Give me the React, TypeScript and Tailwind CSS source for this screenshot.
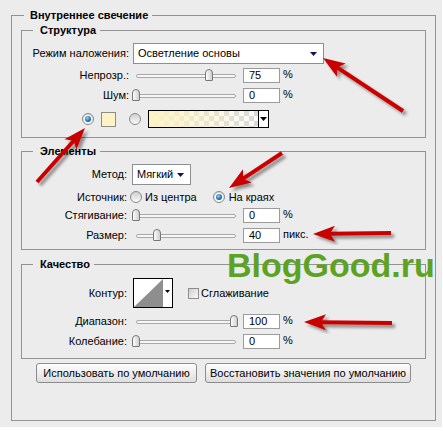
import type { ReactNode } from "react"

const arrows: { from: [number, number]; to: [number, number] }[] = [
  { from: [403, 111], to: [323, 58] },
  { from: [37, 182], to: [85, 128] },
  { from: [282, 153], to: [229, 188] },
  { from: [391, 233], to: [313, 234] },
  { from: [392, 323], to: [304, 322] },
]

function Box({ title, children, className = "" }: { title: string; children: ReactNode; className?: string }) {
  return (
    <fieldset className={"border border-[#939393] p-0 " + className}>
      <legend className="ml-[11px] pl-[7px] pr-[4px] text-[11px] leading-[14px] font-bold">{title}</legend>
      {children}
    </fieldset>
  )
}

function Label({ children, w = "w-[107px]" }: { children: ReactNode; w?: string }) {
  return <span className={w + " shrink-0 text-right whitespace-nowrap"}>{children}</span>
}

function Tri({ color = "#000" }: { color?: string }) {
  return (
    <svg width="7" height="4" viewBox="0 0 7 4">
      <polygon points="0,0 7,0 3.5,4" fill={color} />
    </svg>
  )
}

function Dropdown({ text, w }: { text: string; w: string }) {
  return (
    <div className={w + " h-[21px] flex items-center justify-between border border-[#8f8f8f] bg-white pl-[4px] pr-[6px]"}>
      <span>{text}</span>
      <Tri color="#101060" />
    </div>
  )
}

function Slider({ pos }: { pos: number }) {
  return (
    <div className="relative w-[106px] h-[15px] shrink-0">
      <div className="absolute left-[3px] right-[3px] top-[6px] h-[4px] rounded-full border border-[#a9a9a9] bg-[#f6f6f6]" />
      <div
        className="absolute top-[1px] w-[8px] h-[12px] rounded-t-[4px] rounded-b-[1px] border border-[#777] bg-[linear-gradient(to_right,#fdfdfd,#cfcfcf)]"
        style={{ left: 3 + pos * 99 - 4 }}
      />
    </div>
  )
}

function NumRow({ label, pos, value, unit = "%", w, gap = "ml-[4px]", className = "" }: {
  label: string; pos: number; value: string; unit?: string; w?: string; gap?: string; className?: string
}) {
  return (
    <div className={"flex items-center h-[15px] " + className}>
      <Label w={w}>{label}</Label>
      <div className={gap}><Slider pos={pos} /></div>
      <div className="ml-[4px] w-[37px] h-[15px] border border-[#9b9b9b] bg-white pl-[5px] leading-[13px]">{value}</div>
      <span className="ml-[3px] self-start leading-[12px]">{unit}</span>
    </div>
  )
}

function Radio({ checked = false }: { checked?: boolean }) {
  return (
    <span className="flex items-center justify-center w-[12px] h-[12px] shrink-0 rounded-full border border-[#8a8a8a] bg-[linear-gradient(#cfcfcf,#fbfbfb)]">
      {checked && <span className="w-[6px] h-[6px] rounded-full bg-[radial-gradient(circle_at_40%_35%,#8fd0ff,#0b5aa6_70%)] ring-1 ring-white" />}
    </span>
  )
}

function Arrows() {
  return (
    <svg className="absolute left-0 top-0 pointer-events-none" width="443" height="431">
      <defs>
        <filter id="sh" x="-20%" y="-20%" width="140%" height="140%">
          <feDropShadow dx="3" dy="3" stdDeviation="1.6" floodColor="#000" floodOpacity="0.4" />
        </filter>
      </defs>
      {arrows.map((a, i) => {
        const [x1, y1] = a.from
        const [x2, y2] = a.to
        const len = Math.hypot(x2 - x1, y2 - y1)
        const ux = (x2 - x1) / len
        const uy = (y2 - y1) / len
        const nx = -uy
        const ny = ux
        const bx = x2 - ux * 20
        const by = y2 - uy * 20
        const pts = [
          [x2, y2],
          [bx + nx * 8 - ux * 2, by + ny * 8 - uy * 2],
          [bx + ux * 3, by + uy * 3],
          [bx - nx * 8 - ux * 2, by - ny * 8 - uy * 2],
        ].map((p) => p.join(",")).join(" ")
        return (
          <g key={i} filter="url(#sh)">
            <line x1={x1} y1={y1} x2={bx + ux * 4} y2={by + uy * 4} stroke="#c80000" strokeWidth="4" />
            <polygon points={pts} fill="#c80000" />
          </g>
        )
      })}
    </svg>
  )
}

export default function App() {
  return (
    <div className="relative w-[442px] h-[427px] bg-[#ececec] pt-[8px] pl-[11px] pr-[6px] text-[11px] text-black font-['Liberation_Sans',Arial,sans-serif]">
      <fieldset className="border border-[#939393] p-0">
        <legend className="ml-[12px] pl-[6px] pr-[4px] leading-[14px] font-bold">Внутреннее свечение</legend>
        <div className="px-[9px] pt-[1px] pb-[37px]">
          {/* Структура */}
          <Box title="Структура">
            <div className="pt-[6px] pb-[9px]">
              <div className="flex items-center h-[21px]">
                <Label>Режим наложения:</Label>
                <div className="ml-[4px]"><Dropdown text="Осветление основы" w="w-[191px]" /></div>
              </div>
              <NumRow className="mt-[4px]" label="Непрозр.:" pos={0.74} value="75" />
              <NumRow className="mt-[5px]" label="Шум:" pos={0} value="0" />
              <div className="mt-[7px] flex items-center h-[18px] pl-[60px]">
                <Radio checked />
                <span className="ml-[7px] w-[15px] h-[15px] border border-[#8c8c8c] bg-[#fdf3c4]" />
                <span className="ml-[13px]"><Radio /></span>
                <div className="ml-[7px] flex w-[121px] h-[18px] border border-black">
                  <div className="flex-1 bg-[conic-gradient(#d9d9d9_25%,#fafafa_0_50%,#d9d9d9_0_75%,#fafafa_0)] bg-[length:10px_10px]">
                    <div className="h-full bg-[linear-gradient(to_right,#fdf3c4,rgba(253,243,196,0))]" />
                  </div>
                  <div className="w-[10px] flex items-center justify-center border-l border-black bg-white">
                    <Tri />
                  </div>
                </div>
              </div>
            </div>
          </Box>

          {/* Элементы */}
          <Box title="Элементы" className="mt-[6px]">
            <div className="pt-[6px] pb-[6px]">
              <div className="flex items-center h-[21px]">
                <Label w="w-[105px]">Метод:</Label>
                <div className="ml-[5px]"><Dropdown text="Мягкий" w="w-[59px]" /></div>
              </div>
              <div className="mt-[5px] flex items-center h-[14px]">
                <Label w="w-[105px]">Источник:</Label>
                <span className="ml-[3px]"><Radio /></span>
                <span className="ml-[3px]">Из центра</span>
                <span className="ml-[16px]"><Radio checked /></span>
                <span className="ml-[4px]">На краях</span>
              </div>
              <NumRow className="mt-[4px]" w="w-[105px]" gap="ml-[6px]" label="Стягивание:" pos={0} value="0" />
              <NumRow className="mt-[5px]" w="w-[105px]" gap="ml-[6px]" label="Размер:" pos={0.21} value="40" unit="пикс." />
            </div>
          </Box>

          {/* Качество */}
          <Box title="Качество" className="mt-[7px]">
            <div className="pt-[7px] pb-[9px]">
              <div className="flex items-center h-[30px]">
                <Label w="w-[105px]">Контур:</Label>
                <svg className="ml-[6px]" width="40" height="30" viewBox="0 0 40 30">
                  <rect x="0.5" y="0.5" width="39" height="29" fill="#fff" stroke="#000" />
                  <polygon points="1,29 30,1 30,29" fill="#8e8e8e" />
                  <polygon points="32,12 37,12 34.5,15" fill="#000" />
                </svg>
                <span className="ml-[15px] w-[11px] h-[11px] border border-[#8d8d8d] bg-[linear-gradient(135deg,#cfcfcf,#fbfbfb)]" />
                <span className="ml-[2px]">Сглаживание</span>
              </div>
              <NumRow className="mt-[6px]" w="w-[105px]" gap="ml-[6px]" label="Диапазон:" pos={0.99} value="100" />
              <NumRow className="mt-[5px]" w="w-[105px]" gap="ml-[6px]" label="Колебание:" pos={0} value="0" />
            </div>
          </Box>

          <div className="mt-[4px] flex justify-center gap-[8px]">
            <button className="w-[161px] h-[20px] border border-[#8c8c8c] rounded-[3px] bg-[linear-gradient(#fdfdfd,#dedede)]">
              Использовать по умолчанию
            </button>
            <button className="w-[206px] h-[20px] border border-[#8c8c8c] rounded-[3px] bg-[linear-gradient(#fdfdfd,#dedede)]">
              Восстановить значения по умолчанию
            </button>
          </div>
        </div>
      </fieldset>

      <div className="absolute left-[227px] top-[248px] text-[34px] leading-[34px] font-bold text-[#5ba323]">BlogGood.ru</div>
      <Arrows />
    </div>
  )
}
